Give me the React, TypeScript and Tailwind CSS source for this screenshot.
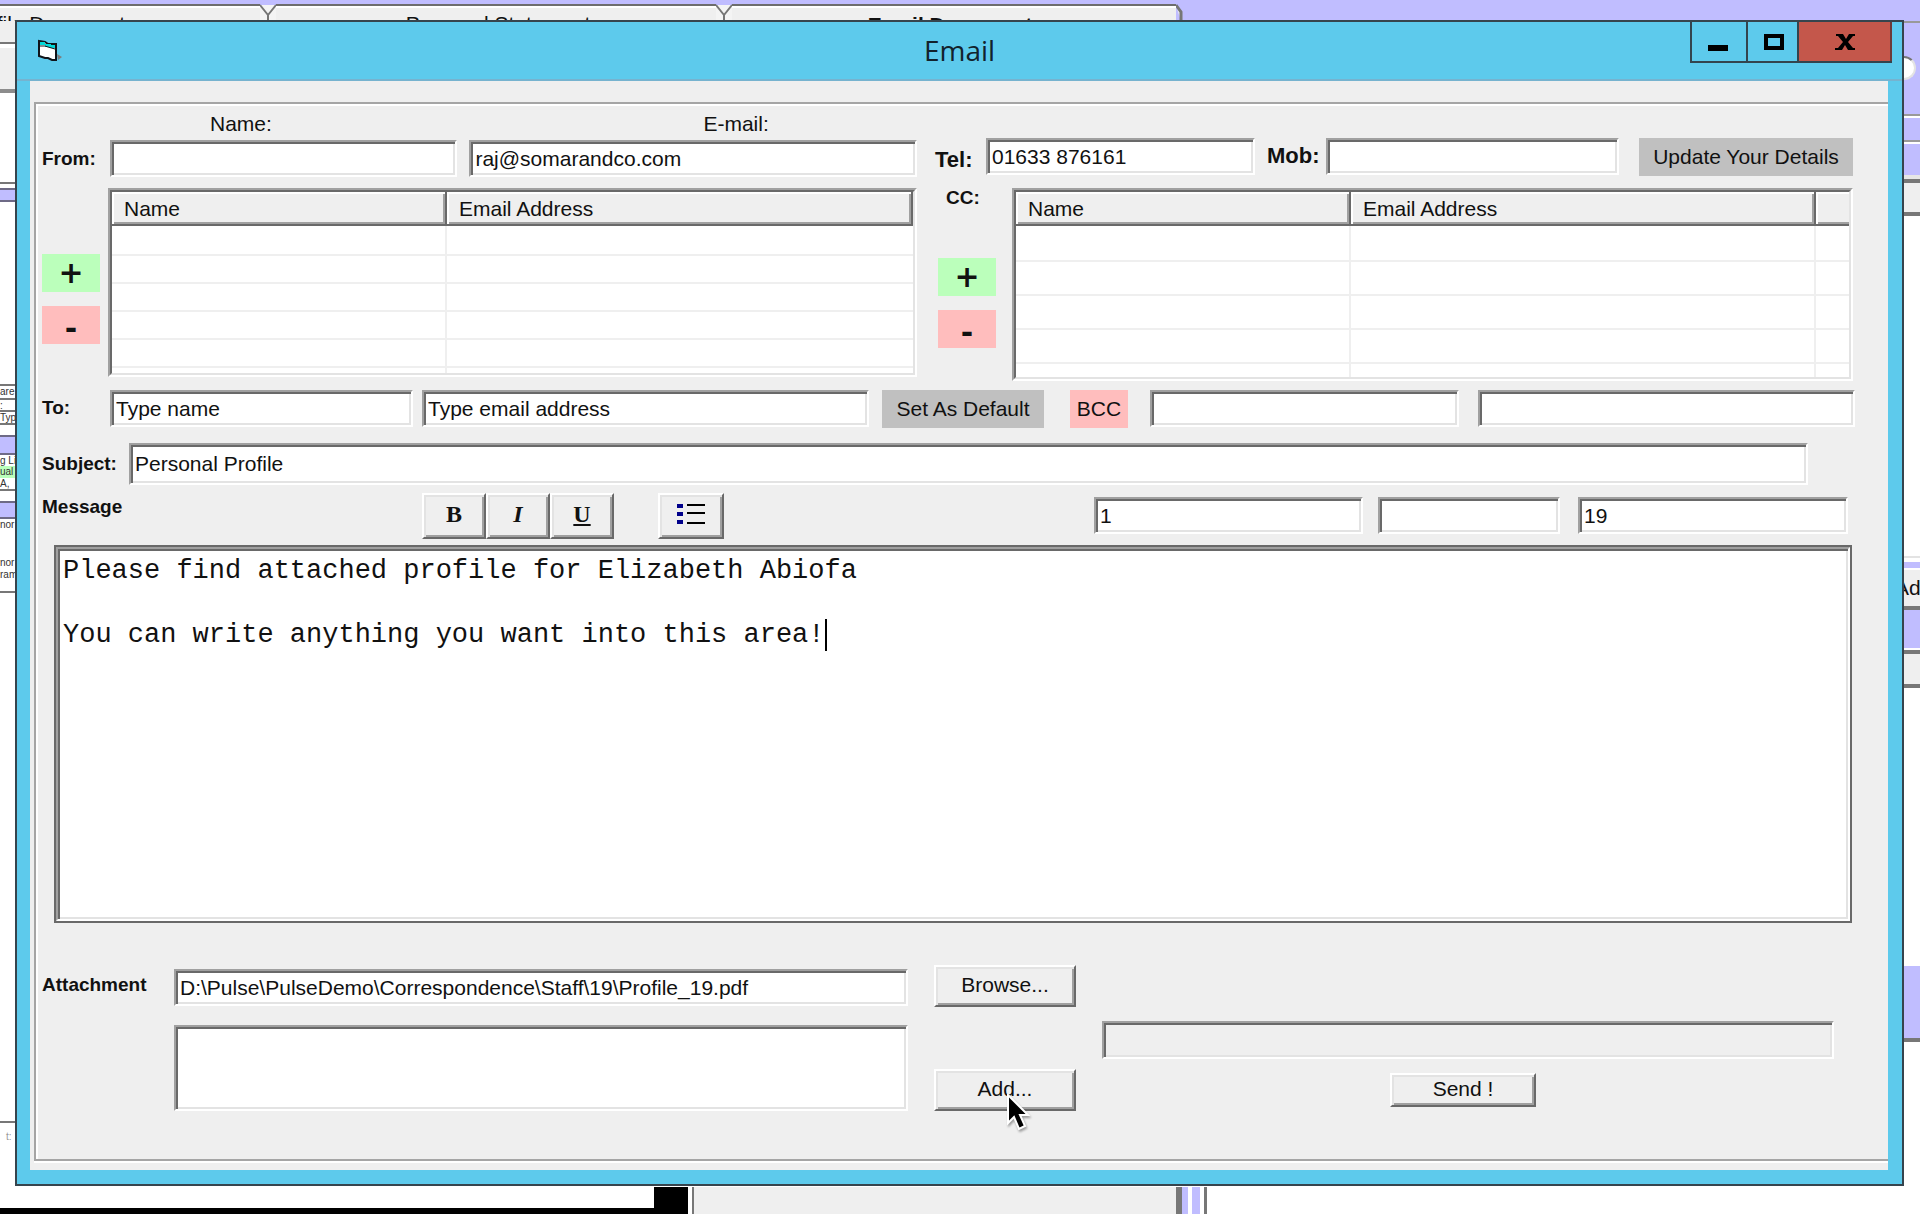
import React from "react";

const sunken =
  "border-2 border-t-[#a0a0a0] border-l-[#a0a0a0] border-r-white border-b-white shadow-[inset_2px_2px_0_#696969,inset_-2px_-2px_0_#e3e3e3]";
const raised =
  "border-2 border-t-white border-l-white border-r-[#696969] border-b-[#696969] shadow-[inset_2px_2px_0_#e3e3e3,inset_-2px_-2px_0_#a0a0a0]";
const boldLabel = "shrink-0 font-bold text-[19px] leading-5 whitespace-nowrap";

type FieldProps = { label: string; value?: string; className: string; id?: string };

function Field({ label, value = "", className, id }: FieldProps) {
  return (
    <div className={`min-w-0 ${className}`}>
      <input
        id={id}
        type="text"
        aria-label={label}
        defaultValue={value}
        className={`${sunken} block h-full w-full rounded-none bg-white px-1 text-[21px] leading-6 text-[#111] outline-none`}
      />
    </div>
  );
}

function ToolButton({ label, className, children }: { label: string; className: string; children: React.ReactNode }) {
  return (
    <button type="button" aria-label={label} className={`${raised} flex h-[46px] items-center justify-center bg-[#efefef] pb-1 ${className}`}>
      {children}
    </button>
  );
}

function PushButton({ className, children }: { className: string; children: React.ReactNode }) {
  return (
    <button type="button" className={`${raised} flex items-center justify-center bg-[#efefef] pb-[2px] text-[21px] leading-6 text-[#111] ${className}`}>
      {children}
    </button>
  );
}

function AddRemove({ list }: { list: string }) {
  return (
    <>
      <button type="button" aria-label={`Add ${list} recipient`} className="block h-[38px] w-[58px] bg-[#bbffbb] font-['DejaVu_Sans'] text-[30px] leading-[38px] font-bold">
        +
      </button>
      <button type="button" aria-label={`Remove ${list} recipient`} className="mt-[14px] block h-[38px] w-[58px] bg-[#ffbdbd] pt-1 font-['DejaVu_Sans'] text-[30px] leading-[38px] font-bold">
        -
      </button>
    </>
  );
}

const headCell =
  "h-[34px] border-b-2 border-r-2 border-[#696969] bg-[#efefef] pt-[2px] pb-0 pl-3 text-left text-[21px] leading-6 font-normal shadow-[inset_2px_2px_0_white,inset_-2px_-2px_0_#a0a0a0]";

function RecipientTable({ label, rows, rowClass, cols, extra }: { label: string; rows: number; rowClass: string; cols: string[]; extra?: boolean }) {
  const cell = "border-r-2 border-[#efefef] p-0";
  return (
    <table aria-label={label} className="h-full w-full table-fixed border-separate border-spacing-0">
      <colgroup>
        {cols.map((c, i) => (
          <col key={i} className={c} />
        ))}
      </colgroup>
      <thead>
        <tr>
          <th className={headCell}>Name</th>
          <th className={headCell}>Email Address</th>
          {extra && <th className="h-[34px] border-b-2 border-[#696969] bg-[#efefef] p-0 shadow-[inset_2px_2px_0_white,inset_0_-2px_0_#a0a0a0]" />}
        </tr>
      </thead>
      <tbody>
        {Array.from({ length: rows }, (_, i) => (
          <tr key={i} className={rowClass}>
            <td className={`${cell} border-b-2`} />
            <td className={`border-b-2 border-[#efefef] p-0 ${extra ? "border-r-2" : ""}`} />
            {extra && <td className="border-b-2 border-[#efefef] p-0" />}
          </tr>
        ))}
        <tr>
          <td className={cell} />
          <td className={extra ? cell : "p-0"} />
          {extra && <td className="p-0" />}
        </tr>
      </tbody>
    </table>
  );
}

function TabNotch() {
  return (
    <svg width="16" height="17" viewBox="0 0 16 17" className="shrink-0" aria-hidden="true">
      <path d="M0 1H16V17H0Z" fill="#f4f4f4" />
      <path d="M0 1L8 11L16 1M8 10V17" fill="none" stroke="#767676" strokeWidth="2" />
    </svg>
  );
}

function Backdrop() {
  return (
    <div aria-hidden="true" className="absolute inset-0 flex flex-col overflow-hidden bg-white">
      <div className="flex h-[21px] shrink-0 bg-[#c0bdff] pt-1 text-[21px] leading-6">
        <div className="h-[40px] w-[260px] border-t-2 border-[#6d6d6d] bg-[#efefef] pt-[6px] whitespace-nowrap shadow-[inset_0_2px_0_white]">
          <span className="-ml-[36px]">Profile Document</span>
        </div>
        <TabNotch />
        <div className="h-[17px] w-[440px] overflow-hidden border-t-2 border-[#6d6d6d] bg-[#efefef] pt-[6px] pl-1 text-center shadow-[inset_0_2px_0_white]">
          Personal Statement
        </div>
        <TabNotch />
        <div className="h-[17px] w-[444px] overflow-hidden border-t-2 border-[#6d6d6d] bg-[#efefef] pt-[7px] pr-2 text-center font-bold shadow-[inset_0_2px_0_white]">
          Email Document
        </div>
        <svg width="8" height="17" viewBox="0 0 8 17">
          <path d="M0 1L5 8V17" fill="#efefef" stroke="#767676" strokeWidth="3" />
        </svg>
      </div>
      <div className="flex flex-1 justify-between">
        <div className="flex w-[15px] flex-col overflow-hidden text-[10px] leading-3 whitespace-nowrap text-[#333]">
          <div className="h-[23px] border-b-2 border-[#777] bg-[#efefef]" />
          <div className="mt-1 h-[45px] border-b-4 border-[#8c8c8c] bg-[#efefef]" />
          <div className="h-[91px] border-b-2 border-[#777]" />
          <div className="mt-1 h-[14px] border-y-2 border-[#6e6a86] bg-[#c0bdff]" />
          <div className="h-[184px] border-b-2 border-[#777]" />
          <div className="h-[14px] border-b-2 border-[#777]">are</div>
          <div className="h-3 border-b-2 border-[#777]">:</div>
          <div className="h-[13px] border-b-2 border-[#777]">Typ</div>
          <div className="mt-[10px] h-[20px] border-y-2 border-[#6e6a86] bg-[#c0bdff]" />
          <div className="h-[11px]">g Li</div>
          <div className="h-[12px] bg-[#bbffbb]">ual</div>
          <div className="h-[13px] border-b-2 border-[#777]">A,</div>
          <div className="mt-[10px] h-[18px] border-y-2 border-[#6e6a86] bg-[#c0bdff]" />
          <div className="h-[38px]">nor</div>
          <div className="h-3">nor</div>
          <div className="h-6 border-b-2 border-[#777]">ram</div>
          <div className="h-[530px] border-b-2 border-[#777]" />
          <div className="mt-2 pl-[6px] text-[#999]">t:</div>
        </div>
        <div className="flex w-4 flex-col overflow-hidden">
          <div className="relative h-[95px] border-t-2 border-b-2 border-[#999] bg-[#c0bdff]">
            <div className="absolute top-[33px] -left-3 size-6 rounded-full border-2 border-t-[#777] border-r-[#e3e3e3] border-b-[#e3e3e3] border-l-[#777] bg-white" />
          </div>
          <div className="h-[26px] border-t-2 border-b-2 border-t-white border-b-[#999] bg-[#c0bdff]" />
          <div className="h-[37px] border-t-2 border-b-4 border-t-white border-b-[#e6e6e6] bg-[#c0bdff]" />
          <div className="h-[37px] border-y-4 border-[#777] bg-[#efefef]" />
          <div className="h-[342px] border-b-2 border-[#e3e3e3]" />
          <div className="mt-1 h-[6px] bg-[#c0bdff]" />
          <div className="h-[42px] border-t-2 border-b-4 border-t-white border-b-[#777] bg-[#efefef] text-[21px] leading-9">
            <span className="-ml-[9px]">Add</span>
          </div>
          <div className="h-[38px] bg-[#c0bdff]" />
          <div className="mt-[2px] h-[38px] border-t-4 border-b-4 border-[#777] bg-[#efefef]" />
          <div className="mt-[278px] h-[76px] border-b-4 border-[#777] bg-[#c0bdff]" />
        </div>
      </div>
      <div className="flex h-[27px] shrink-0">
        <div className="w-[654px] border-b-6 border-black" />
        <div className="w-[34px] bg-black" />
        <div className="ml-1 w-[490px] border-r-6 border-l-2 border-[#777] bg-[#efefef]" />
        <div className="w-[6px] bg-[#c0bdff]" />
        <div className="ml-1 w-[8px] bg-[#c0bdff]" />
        <div className="ml-1 w-[3px] bg-[#777]" />
      </div>
    </div>
  );
}

function TitleBar() {
  return (
    <header className="relative flex h-[59px] items-center justify-center border-b-2 border-[#76b3cf]">
      <svg width="27" height="24" viewBox="0 0 27 24" className="absolute top-[17px] left-5" aria-hidden="true">
        <path d="M20 15l5 3-4 3z" fill="#7d7d7d" />
        <path d="M2 2l6 1 3 2h8v16h-4l-4-2-3 0-6-2z" fill="#fff" stroke="#10141a" strokeWidth="2" />
        <path d="M3 3h5v3H3zM8 5h6v3H8zM13 6h5v3h-5z" fill="#00d8d8" />
        <path d="M3 7h5l3 1 7 2" fill="none" stroke="#10141a" strokeWidth="1" />
      </svg>
      <h1 className="pb-[2px] font-['Open_Sans'] text-[28px] leading-8 text-[#12222c]">Email</h1>
      <div className="absolute top-0 right-[10px] flex h-[41px] border-b-2 border-l-2 border-[#33444e]">
        <button type="button" aria-label="Minimize" className="w-[56px] border-r-2 border-[#33444e]">
          <svg width="54" height="39" viewBox="0 0 54 39">
            <path d="M16 23h20v6H16z" />
          </svg>
        </button>
        <button type="button" aria-label="Maximize" className="w-[51px] border-r-2 border-[#33444e]">
          <svg width="49" height="39" viewBox="0 0 49 39">
            <path d="M18 14h16v12H18z" fill="none" stroke="#000" strokeWidth="4" />
          </svg>
        </button>
        <button type="button" aria-label="Close" className="w-[93px] border-r-2 border-[#6d3a38] bg-[#c4574b]">
          <svg width="91" height="39" viewBox="0 0 91 39">
            <path d="M37 12h7l3 5 3-5h6v2h-2l-5 6 5 6h2v2h-7l-3-5-3 5h-7v-2h3l5-6-5-6h-2z" />
          </svg>
        </button>
      </div>
    </header>
  );
}

function Cursor() {
  return (
    <svg width="26" height="38" viewBox="0 0 26 38" className="pointer-events-none absolute top-[25px] left-[72px] drop-shadow-[1px_2px_1px_rgba(0,0,0,0.35)]" aria-hidden="true">
      <path d="M2 1V29L8 23L13 35L19 32L14 21H22Z" fill="#000" stroke="#fff" strokeWidth="2" />
    </svg>
  );
}

const message = "Please find attached profile for Elizabeth Abiofa\n\nYou can write anything you want into this area!";

export default function App() {
  return (
    <div className="relative min-h-screen overflow-hidden pt-5 pr-4 pb-[26px] pl-[15px] font-['Liberation_Sans',sans-serif] text-[#111]">
      <Backdrop />
      <main className="relative border-2 border-[#36444d] bg-[#5dcaec] pr-[14px] pb-[14px] pl-[13px]">
        <div className="-mr-[14px] -ml-[13px]">
          <TitleBar />
        </div>
        <div className="bg-[#efefef] pt-[21px] pb-[9px] pl-1">
          <form className="border-y-2 border-l-2 border-[#a5a5a5] pb-12 pl-[6px] shadow-[inset_2px_2px_0_white,0_2px_0_white]" onSubmit={(e) => e.preventDefault()}>
            <div className="flex gap-[18px] pr-[35px]">
              <section className="min-w-0 flex-[875]">
                <div className="flex h-9 items-center gap-3 pt-1 pl-[68px] text-[21px] leading-6">
                  <div className="flex flex-[347]">
                    <label htmlFor="from-name" className="ml-[100px]">Name:</label>
                  </div>
                  <div className="flex flex-[447]">
                    <label htmlFor="from-email" className="ml-[234px]">E-mail:</label>
                  </div>
                </div>
                <div className="flex items-center">
                  <span className={`${boldLabel} w-[68px]`}>From:</span>
                  <Field id="from-name" label="From name" className="h-[37px] flex-[347]" />
                  <Field id="from-email" label="From e-mail" value="raj@somarandco.com" className="ml-3 h-[37px] flex-[447]" />
                </div>
                <div className="mt-[11px] flex">
                  <div className="w-[66px] shrink-0 pt-[66px]">
                    <AddRemove list="To" />
                  </div>
                  <div className="h-[189px] min-w-0 flex-1 border-2 border-t-[#a0a0a0] border-r-white border-b-white border-l-[#a0a0a0]">
                    <div className="h-full overflow-hidden border-2 border-t-[#696969] border-r-[#e3e3e3] border-b-[#e3e3e3] border-l-[#696969] bg-white">
                      <RecipientTable label="To recipients" rows={5} rowClass="h-7 first:h-[30px]" cols={["w-[335px]", ""]} />
                    </div>
                  </div>
                </div>
              </section>
              <section className="min-w-0 flex-[918] pt-[34px]">
                <div className="flex h-[38px] items-start">
                  <label htmlFor="tel" className="w-[51px] shrink-0 pt-[10px] text-[22px] leading-6 font-bold">Tel:</label>
                  <Field id="tel" label="Tel" value="01633 876161" className="h-[37px] flex-[269]" />
                  <label htmlFor="mob" className="ml-3 w-[59px] shrink-0 pt-[6px] text-[22px] leading-6 font-bold">Mob:</label>
                  <Field id="mob" label="Mob" className="h-[37px] flex-[293]" />
                  <button type="button" className="ml-5 h-[38px] w-[214px] shrink-0 bg-[#c0c0c0] text-[21px] leading-6 whitespace-nowrap">
                    Update Your Details
                  </button>
                </div>
                <div className="mt-3 flex">
                  <div className="w-[77px] shrink-0 pl-[3px]">
                    <div className={`${boldLabel} mb-[50px] pl-2`}>CC:</div>
                    <AddRemove list="CC" />
                  </div>
                  <div className="h-[193px] min-w-0 flex-1 border-2 border-t-[#a0a0a0] border-r-white border-b-white border-l-[#a0a0a0]">
                    <div className="h-full overflow-hidden border-2 border-t-[#696969] border-r-[#e3e3e3] border-b-[#e3e3e3] border-l-[#696969] bg-white">
                      <RecipientTable label="CC recipients" rows={4} rowClass="h-[34px] first:h-9" cols={["w-[335px]", "", "w-[33px]"]} extra />
                    </div>
                  </div>
                </div>
              </section>
            </div>

            <div className="mt-[9px] flex items-start pr-[33px]">
              <span className={`${boldLabel} w-[68px] pt-2`}>To:</span>
              <Field label="To name" value="Type name" className="h-[37px] flex-[303]" />
              <Field label="To email address" value="Type email address" className="ml-[9px] h-[37px] flex-[447]" />
              <button type="button" className="ml-[13px] h-[38px] w-[162px] shrink-0 bg-[#c0c0c0] text-[21px] leading-6 whitespace-nowrap">
                Set As Default
              </button>
              <button type="button" className="ml-[26px] h-[38px] w-[58px] shrink-0 bg-[#ffbdbd] text-[21px] leading-6">
                BCC
              </button>
              <Field label="BCC name" className="ml-[22px] h-[37px] flex-[309]" />
              <Field label="BCC email address" className="ml-[19px] h-[37px] flex-[377]" />
            </div>

            <div className="mt-[15px] flex items-center pr-20">
              <label htmlFor="subject" className={`${boldLabel} w-[87px]`}>Subject:</label>
              <Field id="subject" label="Subject" value="Personal Profile" className="h-[42px] flex-1" />
            </div>

            <div className="mt-2 flex items-start pr-10">
              <div className="flex flex-[380] pt-1">
                <label htmlFor="message" className={boldLabel}>Message</label>
              </div>
              <div className="flex">
                <ToolButton label="Bold" className="w-16">
                  <span className="font-['Liberation_Serif'] text-[24px] leading-6 font-bold">B</span>
                </ToolButton>
                <ToolButton label="Italic" className="w-16">
                  <span className="font-['Liberation_Serif'] text-[24px] leading-6 font-bold italic">I</span>
                </ToolButton>
                <ToolButton label="Underline" className="w-16">
                  <span className="font-['Liberation_Serif'] text-[24px] leading-6 font-bold underline">U</span>
                </ToolButton>
              </div>
              <ToolButton label="Bulleted list" className="ml-11 w-[66px]">
                <svg width="30" height="24" viewBox="0 0 30 24">
                  <path d="M1 2h6v4H1zM1 10h6v4H1zM1 18h6v4H1z" fill="#00008b" />
                  <path d="M11 2h18v2H11zM11 10h18v2H11zM11 20h18v2H11z" />
                </svg>
              </ToolButton>
              <div className="flex-[370]" />
              <Field label="Branch number" value="1" className="mt-1 h-[37px] flex-[269]" />
              <Field label="Reference" className="mt-1 ml-[15px] h-[37px] flex-[182]" />
              <Field label="Staff number" value="19" className="mt-1 ml-[18px] h-[37px] flex-[270]" />
            </div>

            <div className="mt-[6px] mr-9 ml-3 border-2 border-[#696969]">
              <div className={`${sunken} relative bg-white px-[3px] pt-[6px] font-['Liberation_Mono'] text-[27px] leading-8`}>
                <textarea
                  id="message"
                  defaultValue={message}
                  className="relative block h-[364px] w-full resize-none bg-transparent pr-1 pl-[2px] text-[#111] outline-none"
                />
                <span className="pointer-events-none absolute top-[70px] left-[calc(5px+47ch)] h-8 w-[2px] bg-black" />
              </div>
            </div>

            <div className="mt-[42px] flex items-start pr-[54px]">
              <label htmlFor="attachment" className={`${boldLabel} w-[132px] pt-[10px]`}>Attachment</label>
              <div className="min-w-0 flex-[734] pt-1">
                <Field id="attachment" label="Attachment path" value="D:\Pulse\PulseDemo\Correspondence\Staff\19\Profile_19.pdf" className="h-[37px] w-full" />
                <div role="listbox" aria-label="Attached files" className={`${sunken} mt-[19px] h-[86px] bg-white`} />
              </div>
              <div className="mx-[26px] w-[142px] shrink-0">
                <PushButton className="h-[42px] w-full">Browse...</PushButton>
                <div className="relative mt-[62px]">
                  <PushButton className="h-[42px] w-full">Add...</PushButton>
                  <Cursor />
                </div>
              </div>
              <div className="min-w-0 flex-[732] pt-14">
                <div role="progressbar" aria-label="Sending progress" className={`${sunken} h-[38px]`} />
                <PushButton className="mt-[14px] ml-[288px] h-[34px] w-[146px]">Send !</PushButton>
              </div>
            </div>
          </form>
        </div>
      </main>
    </div>
  );
}
